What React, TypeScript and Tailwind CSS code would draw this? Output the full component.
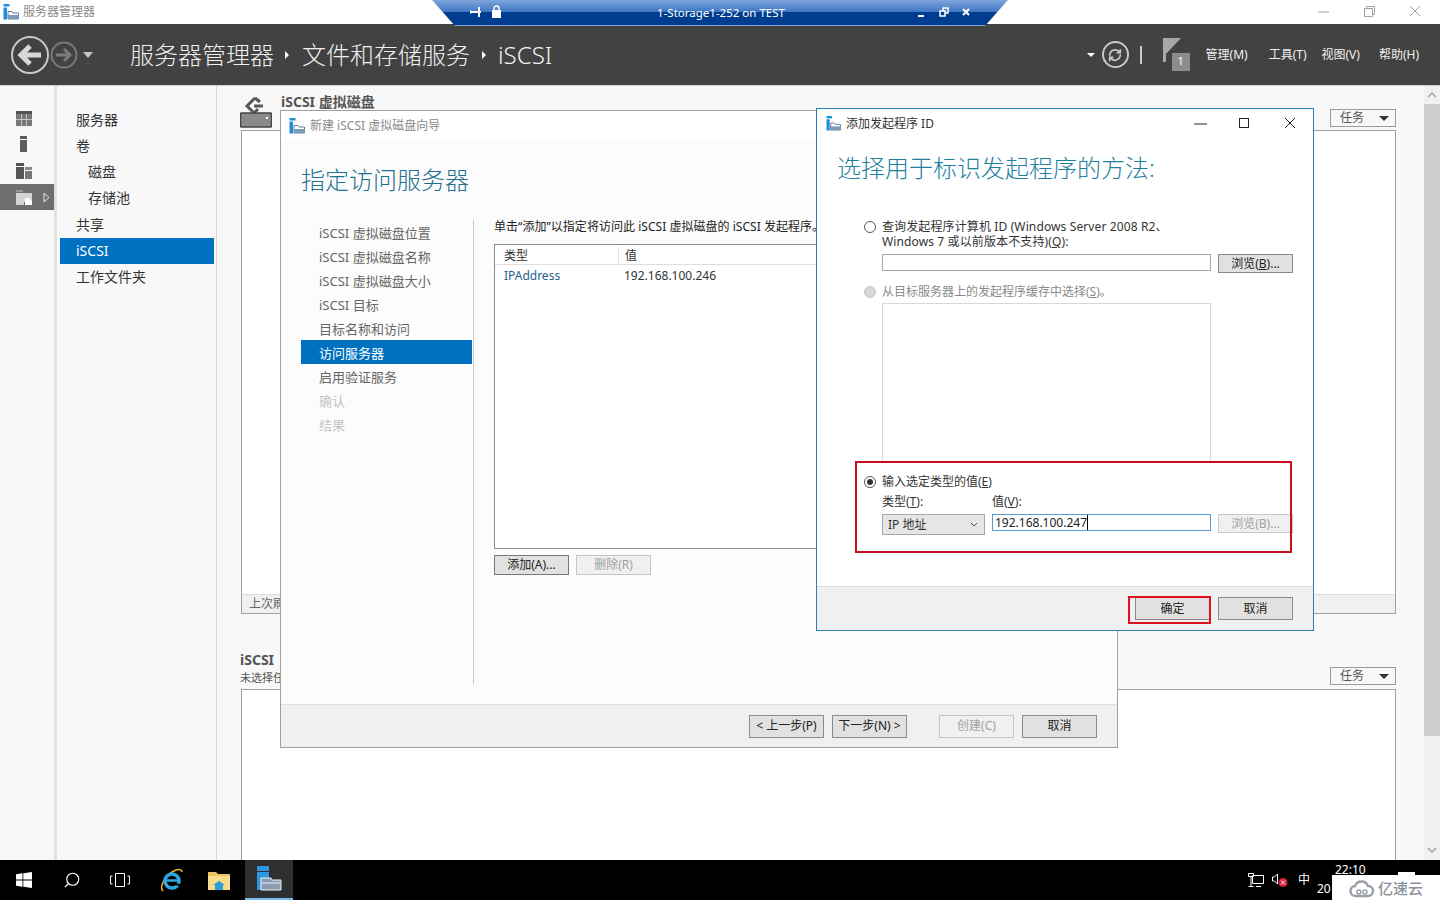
import React from "react";
import { Search, RefreshCw } from "lucide-react";

const font = "[font-family:'Noto_Sans','Noto_Sans_CJK_SC',sans-serif]";

function SmIcon({ size = 16 }: { size?: number }) {
  return (
    <svg width={size} height={size} viewBox="0 0 16 16">
      <rect x="0.5" y="0" width="6" height="2.5" fill="#1f8fd6" />
      <rect x="0.5" y="3.5" width="3.5" height="12" fill="#1f8fd6" />
      <path d="M5 7.5h4l1 1.5h5.5v6H5z" fill="#fff" stroke="#5f7f9c" />
      <rect x="5" y="11" width="10.5" height="4" fill="#7d9bb8" />
    </svg>
  );
}

function Btn({ label, className = "" }: { label: React.ReactNode; className?: string }) {
  return (
    <div className={`w-[75px] h-[23px] flex items-center justify-center text-xs border border-[#8a8a8a] bg-[#e1e1e1] text-[#222] ${className}`}>
      {label}
    </div>
  );
}

function TaskBtn() {
  return (
    <div className="w-[66px] h-[18px] border border-[#9a9a9a] bg-[#f8f8f8] flex items-center pl-[9px] text-xs text-[#555]">
      任务
      <span className="ml-[15px] w-0 h-0 border-x-[5px] border-x-transparent border-t-[5px] border-t-[#333]" />
    </div>
  );
}

function RailIcon({ kind }: { kind: number }) {
  if (kind === 0)
    return (
      <svg width="16" height="15" viewBox="0 0 16 15">
        <path d="M0 0h16v3H0z" fill="#555" />
        <path d="M0 3h16v12H0z" fill="#777" />
        <path d="M5 3h1v12H5zM10 3h1v12h-1zM0 8h16v1H0z" fill="#c4c4c4" />
      </svg>
    );
  if (kind === 1)
    return (
      <svg width="8" height="16" viewBox="0 0 8 16">
        <path d="M0 0h7v3H0zM0 4h7v12H0z" fill="#5c5c5c" />
      </svg>
    );
  if (kind === 2)
    return (
      <svg width="16" height="16" viewBox="0 0 16 16">
        <path d="M0 0h8v3H0zM0 4h8v12H0z" fill="#555" />
        <path d="M9 4h7v3H9z" fill="#8c8c8c" />
        <path d="M9 8h7v8H9z" fill="#777" />
      </svg>
    );
  return (
    <svg width="16" height="15" viewBox="0 0 16 15">
      <path d="M0 0h7v2H0z" fill="#999" />
      <path d="M0 3h16v9H0zM0 3h8v12H0z" fill="#d4d4d4" />
      <path d="M9 8h4l3 3v4H9z" fill="#fff" />
    </svg>
  );
}

const navItems = [
  { t: "服务器" },
  { t: "卷" },
  { t: "磁盘", sub: true },
  { t: "存储池", sub: true },
  { t: "共享", tall: true },
  { t: "iSCSI", active: true },
  { t: "工作文件夹" },
];

const steps = [
  "iSCSI 虚拟磁盘位置",
  "iSCSI 虚拟磁盘名称",
  "iSCSI 虚拟磁盘大小",
  "iSCSI 目标",
  "目标名称和访问",
  "访问服务器",
  "启用验证服务",
  "确认",
  "结果",
];

function Radio({ on, off }: { on?: boolean; off?: boolean }) {
  return (
    <span className={`w-3 h-3 rounded-full border flex items-center justify-center shrink-0 ${off ? "bg-[#d8d8d8] border-[#c4c4c4]" : "bg-white border-[#555]"}`}>
      {on && <span className="w-1.5 h-1.5 rounded-full bg-[#333]" />}
    </span>
  );
}

function Wizard() {
  return (
    <div className="absolute left-[280px] top-[110px] w-[838px] h-[638px] border border-[#a0a0a0] bg-[#fcfcfc] flex flex-col">
      <div className="h-[29px] bg-white flex items-center pl-[8px] gap-[5px] text-xs text-[#8a8a8a]">
        <SmIcon />
        新建 iSCSI 虚拟磁盘向导
      </div>
      <div className="flex-1 flex flex-col pl-[20px]">
        <div className="text-2xl leading-8 font-light text-[#1f6f8f] mt-[24px] h-[36px]">指定访问服务器</div>
        <div className="flex mt-[20px] flex-1">
          <div className="w-[172px] border-r border-[#c8c8c8] h-[464px] flex flex-col box-content">
            {steps.map((s, i) => (
              <div
                key={s}
                className={`h-6 w-[171px] pl-[18px] pt-[4px] flex items-center text-[13px] ${i === 5 ? "bg-[#0070c0] text-white" : i > 6 ? "text-[#c4c4c4]" : "text-[#666]"}`}
              >
                {s}
              </div>
            ))}
          </div>
          <div className="pl-[20px] flex-1">
            <div className="text-xs h-[18px] leading-[16px] text-[#222] whitespace-nowrap -mt-[1px] tracking-[0.03px]">
              单击“添加”以指定将访问此 iSCSI 虚拟磁盘的 iSCSI 发起程序。
            </div>
            <div className="mt-[7px] w-[400px] h-[305px] border border-[#8c8c8c] bg-white">
              <div className="h-[20px] pt-[2px] border-b border-[#dedede] flex text-xs text-[#333]">
                <div className="w-[124px] pl-[9px] border-r border-[#e4e4e4] flex items-center">类型</div>
                <div className="pl-[6px] flex items-center">值</div>
              </div>
              <div className="h-[20px] pt-[2px] flex text-xs items-center">
                <div className="w-[130px] pl-[9px] text-[#1f5f8f]">IPAddress</div>
                <div className="text-[#333] -ml-px">192.168.100.246</div>
              </div>
            </div>
            <div className="flex gap-[7px] mt-[6px]">
              <Btn label="添加(A)..." className="!h-[20px] border-[#777]" />
              <Btn label="删除(R)" className="!h-[20px] border-[#c4c4c4] bg-[#f0f0f0] text-[#a0a0a0]" />
            </div>
          </div>
        </div>
      </div>
      <div className="h-[43px] bg-[#f0f0f0] border-t border-[#dfdfdf] flex items-center justify-end pr-[20px]">
        <Btn label="< 上一步(P)" />
        <Btn label="下一步(N) >" className="ml-[8px] border-[#1f79c4]" />
        <Btn label="创建(C)" className="ml-[32px] border-[#c4c4c4] bg-[#f0f0f0] text-[#a0a0a0]" />
        <Btn label="取消" className="ml-[8px]" />
      </div>
    </div>
  );
}

function Dialog() {
  return (
    <div className="absolute left-[816px] top-[108px] w-[498px] h-[523px] border border-[#2a7db5] bg-white flex flex-col">
      <div className="h-[29px] flex items-center pl-[9px] gap-[5px] text-xs text-[#333] shrink-0">
        <SmIcon size={15} />
        <span className="flex-1">添加发起程序 ID</span>
        <svg width="110" height="14" viewBox="0 0 110 14" className="mr-[16px]">
          <path d="M7 7h13" stroke="#222" />
          <rect x="52.5" y="1.5" width="9" height="9" fill="none" stroke="#222" />
          <path d="M98 1l10 10M108 1L98 11" stroke="#222" fill="none" />
        </svg>
      </div>
      <div className="flex-1 relative">
        <div className="pl-5 text-2xl leading-8 font-light text-[#1f7f9f] mt-[14px] h-[32px]">选择用于标识发起程序的方法:</div>
        <div className="pl-[47px] mt-[35px]">
          <div className="flex gap-[6px] text-xs leading-[15px] text-[#333] tracking-[0.12px]">
            <span className="mt-[2px]"><Radio /></span>
            <div>
              查询发起程序计算机 ID (Windows Server 2008 R2、
              <br />
              Windows 7 或以前版本不支持)(<u>Q</u>):
            </div>
          </div>
          <div className="flex ml-[18px] mt-[5px]">
            <div className="w-[329px] h-[17px] border border-[#a8a8a8] bg-white" />
            <Btn label={<>浏览(<u>B</u>)...</>} className="ml-[7px] !h-[19px]" />
          </div>
          <div className="flex items-center gap-[6px] mt-[11px] text-xs text-[#8a8a8a] h-[16px]">
            <Radio off />
            <span>从目标服务器上的发起程序缓存中选择(<u>S</u>)。</span>
          </div>
          <div className="ml-[18px] mt-[3px] w-[329px] h-[158px] border border-[#d8d8d8] border-b-0" />
          <div className="flex items-center gap-[6px] mt-[13px] text-xs text-[#333] h-[16px]">
            <Radio on />
            <span>输入选定类型的值(<u>E</u>)</span>
          </div>
          <div className="flex ml-[18px] mt-[4px] text-xs text-[#333]">
            <span className="w-[110px]">类型(<u>T</u>):</span>
            <span>值(<u>V</u>):</span>
          </div>
          <div className="flex ml-[18px] mt-[4px] items-start">
            <div className="w-[103px] h-[21px] border border-[#a8a8a8] bg-[#e6e6e6] flex items-center pl-[5px] pr-[6px] justify-between text-xs text-[#333]">
              IP 地址
              <svg width="8" height="5" viewBox="0 0 8 5"><path d="M1 1l3 3 3-3" fill="none" stroke="#555" /></svg>
            </div>
            <div className="ml-[7px] w-[219px] h-[17px] border border-[#5b9bd5] bg-white flex items-center pl-[2px] text-xs text-[#222]">
              192.168.100.247<span className="w-px h-[15px] bg-black" />
            </div>
            <Btn label="浏览(B)..." className="ml-[7px] !h-[19px] border-[#c8c8c8] bg-[#f0f0f0] text-[#a0a0a0]" />
          </div>
        </div>
        {/* annotation boxes from the screenshot */}
        <div className="absolute left-[38px] top-[323px] w-[437px] h-[92px] border-2 border-[#c8101e]" />
      </div>
      <div className="h-[44px] bg-[#f0f0f0] border-t border-[#dcdcdc] flex justify-end items-start pt-[10px] pr-[20px] gap-[8px] relative shrink-0">
        <Btn label="确定" className="border-[#1f79c4]" />
        <Btn label="取消" />
        <div className="absolute left-[311px] top-[9px] w-[83px] h-[28px] border-2 border-[#e0101e]" />
      </div>
    </div>
  );
}

export default function App() {
  return (
    <div className={`relative w-[1440px] h-[900px] overflow-hidden flex flex-col bg-[#f8f8f8] ${font}`}>
      {/* title bar */}
      <div className="h-6 bg-white flex items-center pl-[3px] shrink-0">
        <SmIcon />
        <span className="ml-[4px] text-xs text-[#8a8a8a]">服务器管理器</span>
        <svg width="112" height="14" viewBox="0 0 112 14" className="ml-auto mr-[13px]">
          <path d="M3 7h11" stroke="#a0a0a0" />
          <path d="M49.5 3.5h8v8h-8zM51.5 3.5v-2h8v8h-2" fill="none" stroke="#a0a0a0" />
          <path d="M95 1l10 10M105 1L95 11" stroke="#a0a0a0" fill="none" />
        </svg>
      </div>

      {/* header */}
      <div className="h-[62px] bg-[#424242] flex items-center shrink-0 text-white border-b border-[#d0d0d0]">
        <svg width="88" height="40" viewBox="0 0 88 40" className="ml-[11px]">
          <circle cx="19" cy="20" r="18" fill="none" stroke="#c8c8c8" strokeWidth="2" />
          <path d="M30 20H11M19 11l-9 9 9 9" fill="none" stroke="#d8d8d8" strokeWidth="5" />
          <circle cx="53" cy="20" r="12.5" fill="none" stroke="#7a7a7a" strokeWidth="2" />
          <path d="M45 20h14M53 14l6 6-6 6" fill="none" stroke="#7a7a7a" strokeWidth="3" />
          <path d="M72 17h10l-5 6z" fill="#c8c8c8" />
        </svg>
        <div className="ml-[31px] flex items-center text-2xl font-light text-[#f0f0f0]">
          服务器管理器
          <span className="ml-[11px] mr-[13px] w-0 h-0 border-y-[4px] border-y-transparent border-l-[4px] border-l-white" />
          文件和存储服务
          <span className="ml-[12px] mr-[12px] w-0 h-0 border-y-[4px] border-y-transparent border-l-[4px] border-l-white" />
          iSCSI
        </div>
        <div className="ml-auto flex items-center">
          <span className="w-0 h-0 border-x-[4px] border-x-transparent border-t-[4px] border-t-white" />
          <span className="ml-[7px] w-[27px] h-[27px] rounded-full border-2 border-[#c8c8c8] flex items-center justify-center">
            <RefreshCw size={14} strokeWidth={3} color="#c8c8c8" />
          </span>
          <span className="ml-[11px] w-[2px] h-[18px] bg-[#c8c8c8]" />
          <span className="relative ml-[21px] w-[30px] h-[34px]">
            <svg width="18" height="24" viewBox="0 0 18 24">
              <path d="M0 0h3v24H0zM3 0h15L3 16z" fill="#a8a8a8" />
            </svg>
            <span className="absolute left-[9px] top-[15px] w-[18px] h-[18px] bg-[#8c8c8c] text-[11px] flex items-center justify-center text-white">1</span>
          </span>
          <div className="ml-[13px] mr-[21px] flex text-xs text-[#f0f0f0]">
            <span>管理(M)</span>
            <span className="ml-[21px]">工具(T)</span>
            <span className="ml-[15px]">视图(V)</span>
            <span className="ml-[19px]">帮助(H)</span>
          </div>
        </div>
      </div>

      {/* main */}
      <div className="flex-1 flex min-h-0">
        <div className="w-[54px] pt-[19px] bg-[#f8f8f8] flex flex-col shrink-0">
          {[0, 1, 2, 3].map((k) => (
            <div key={k} className={`${k === 2 ? "h-[27px]" : "h-[26px]"} w-[54px] pl-4 flex items-center relative ${k === 3 ? "bg-[#6e6e6e]" : ""}`}>
              <span className="w-4 flex justify-center"><RailIcon kind={k} /></span>
              {k === 3 && (
                <svg width="7" height="11" viewBox="0 0 7 11" className="absolute left-[43px]">
                  <path d="M1 1l5 4.5L1 10z" fill="none" stroke="#e8e8e8" />
                </svg>
              )}
            </div>
          ))}
        </div>
        <div className="w-[3px] bg-[#e0e0e0] shrink-0" />
        <div className="w-[160px] pt-[21px] pl-[3px] border-r border-[#d8d8d8] flex flex-col shrink-0">
          {navItems.map((n) => (
            <div
              key={n.t}
              className={`w-[154px] flex items-center text-sm ${n.tall ? "h-[27px] pt-px" : "h-[26px]"} ${n.sub ? "pl-[28px]" : "pl-4"} ${n.active ? "bg-[#0070c0] text-white" : "text-[#333]"}`}
            >
              {n.t}
            </div>
          ))}
        </div>
        <div className="flex-1 flex flex-col pl-[23px] pr-[28px] min-w-0">
          <div className="h-[44px] flex items-end relative shrink-0">
            <svg width="32" height="32" viewBox="0 0 32 32" className="mb-[2px]">
              <path d="M15 2L7 10l7 7 4-4M15 2l5 4" fill="none" stroke="#555" strokeWidth="3" />
              <path d="M14 10h9" stroke="#555" strokeWidth="3" />
              <rect x="0.5" y="17" width="31" height="14" rx="1" fill="#8a8a8a" stroke="#444" strokeWidth="1.5" />
              <rect x="26" y="21" width="2" height="2" fill="#fff" />
            </svg>
            <span className="absolute left-[41px] top-[6px] text-sm font-bold text-[#555]">iSCSI 虚拟磁盘</span>
            <span className="absolute right-0 top-[23px]"><TaskBtn /></span>
          </div>
          <div className="ml-px h-[484px] border border-[#a0a0a0] bg-white flex flex-col justify-end shrink-0">
            <div className="h-[19px] bg-[#f0f0f0] border-t border-[#dcdcdc] pl-[7px] text-xs leading-[17px] text-[#666]">上次刷新</div>
          </div>
          <div className="relative h-[75px] shrink-0 text-[#555]">
            <div className="absolute left-0 top-[37px] text-sm font-bold leading-[18px]">iSCSI</div>
            <div className="absolute left-0 top-[56px] text-[11px] leading-[15px]">未选择任何项</div>
            <span className="absolute right-0 top-[53px]"><TaskBtn /></span>
          </div>
          <div className="ml-px flex-1 border border-[#a0a0a0] border-b-0 bg-white" />
        </div>
        <div className="w-4 bg-[#f0f0f0] flex flex-col items-center shrink-0">
          <svg width="10" height="18" viewBox="0 0 10 18" className="shrink-0"><path d="M1 11l4-4 4 4" fill="none" stroke="#a0a0a0" strokeWidth="1.5" /></svg>
          <div className="w-4 h-[632px] bg-[#cdcdcd]" />
          <svg width="10" height="18" viewBox="0 0 10 18" className="mt-auto shrink-0"><path d="M1 6l4 4 4-4" fill="none" stroke="#a0a0a0" strokeWidth="1.5" /></svg>
        </div>
      </div>

      {/* taskbar */}
      <div className="h-10 bg-black flex items-center shrink-0 relative">
        <div className="w-12 flex justify-center">
          <svg width="16" height="16" viewBox="0 0 16 16"><path d="M0 2.2l6.5-.9v6.2H0zM7.3 1.2L16 0v7.5H7.3zM0 8.4h6.5v6.3L0 13.8zM7.3 8.4H16V16l-8.7-1.2z" fill="#fff" /></svg>
        </div>
        <div className="w-12 flex justify-center"><Search size={18} strokeWidth={1.5} color="#fff" className="-scale-x-100" /></div>
        <div className="w-12 flex justify-center">
          <svg width="20" height="14" viewBox="0 0 20 14"><path d="M5.5.5h9v13h-9zM2.5 3H.5v8h2M17.5 3h2v8h-2" fill="none" stroke="#fff" /></svg>
        </div>
        <div className="ml-[3px] w-12 flex justify-center">
          <svg width="24" height="24" viewBox="0 0 24 24">
            <path d="M4 23C0 19 6 7 15 3c4-2 8-2 8 1" fill="none" stroke="#f0b429" strokeWidth="1.5" />
            <circle cx="13" cy="13" r="7" fill="none" stroke="#2fa8e0" strokeWidth="3.5" />
            <path d="M7 12.5h13" stroke="#2fa8e0" strokeWidth="2.5" />
            <path d="M15 16l6 1" stroke="#000" strokeWidth="2" />
          </svg>
        </div>
        <div className="w-12 flex justify-center">
          <svg width="22" height="19" viewBox="0 0 22 19">
            <path d="M0 1h8l2 2h12v16H0z" fill="#e8c560" />
            <path d="M0 5h22v14H0z" fill="#f7dd8a" />
            <path d="M7 19v-6h8v6z" fill="#2a9fd8" />
            <path d="M5 14l6-4 6 4z" fill="#2a9fd8" />
          </svg>
        </div>
        <div className="ml-[2px] w-12 h-10 bg-[#2f2f2f] border-b-2 border-[#76b9ed] flex justify-center items-center">
          <svg width="26" height="26" viewBox="0 0 26 26">
            <rect x="1" y="0" width="12" height="5" fill="#2f97e0" />
            <rect x="1" y="6" width="12" height="18" fill="#2f97e0" />
            <path d="M5 12h10l1 2h9v10H5z" fill="#8a9cb0" stroke="#eef3f8" />
            <path d="M6 17h18" stroke="#eef3f8" />
          </svg>
        </div>
        <div className="ml-auto mr-[130px] flex items-center text-white">
          <svg width="16" height="15" viewBox="0 0 16 15"><path d="M4.5 2.5h11v8h-11zM.5.5h5v3h-5zM3 3.5v10M.5 13.5h5M8 13.5h5" fill="none" stroke="#fff" /></svg>
          <svg width="16" height="14" viewBox="0 0 16 14" className="ml-[8px]">
            <path d="M.5 4h2l3-3v10l-3-3h-2z" fill="none" stroke="#fff" />
            <circle cx="11" cy="9.5" r="4.5" fill="#d8203a" />
            <path d="M9 7.5l4 4M13 7.5l-4 4" stroke="#fff" />
          </svg>
          <span className="ml-[10px] text-xs">中</span>
        </div>
        <div className="absolute left-[1335px] top-[2px] text-xs text-white">22:10</div>
        <div className="absolute left-[1317px] top-[21px] text-xs text-white">20</div>
        <div className="absolute left-[1398px] top-[12px] w-[17px] h-[3px] bg-white" />
        <div className="absolute left-[1332px] top-[15px] w-[108px] h-[25px] bg-white flex items-center pl-[17px] pt-[2px] gap-[3px] text-[#8a9099] text-[15px] font-medium">
          <svg width="26" height="18" viewBox="0 0 26 18">
            <path d="M7 16a5 5 0 0 1-1-10 7 7 0 0 1 13 0 5 5 0 0 1 0 10z" fill="none" stroke="#9aa0a8" strokeWidth="2.5" />
            <circle cx="10" cy="12" r="2" fill="none" stroke="#9aa0a8" strokeWidth="1.5" />
            <circle cx="16" cy="12" r="2" fill="none" stroke="#9aa0a8" strokeWidth="1.5" />
          </svg>
          亿速云
        </div>
      </div>

      {/* remote desktop connection bar */}
      <div className="absolute left-[432px] top-0 w-[576px] h-[26px] border-b border-[#7fa3d4] [clip-path:polygon(0_0,100%_0,96%_100%,4%_100%)] bg-[linear-gradient(#7fa6dc_0%,#3f78c4_46%,#003d8f_50%,#003d8f_100%)] flex items-center text-white text-[11.5px]">
        <svg width="14" height="12" viewBox="0 0 14 12" className="ml-[38px] -mt-[2px]"><path d="M1 6h10M9 1v10" stroke="#fff" strokeWidth="2" /><path d="M0 4v4l3-2z" fill="#fff" /></svg>
        <svg width="11" height="13" viewBox="0 0 11 13" className="ml-[7px] -mt-[2px]"><rect x="1" y="5" width="9" height="8" fill="#fff" /><path d="M3 6V3.5a2.5 2.5 0 0 1 5 0V6" fill="none" stroke="#fff" strokeWidth="1.5" /></svg>
        <span className="ml-[155px] w-[128px] text-center whitespace-nowrap">1-Storage1-252 on TEST</span>
        <svg width="58" height="12" viewBox="0 0 58 12" className="ml-[132px]">
          <path d="M1 9h6" stroke="#fff" strokeWidth="2" />
          <path d="M23 4h5v5h-5zM26 4V1h5v5h-3" fill="none" stroke="#fff" strokeWidth="1.5" />
          <path d="M46 2l6 6M52 2l-6 6" stroke="#fff" strokeWidth="2" />
        </svg>
      </div>

      <Wizard />
      <Dialog />
    </div>
  );
}
